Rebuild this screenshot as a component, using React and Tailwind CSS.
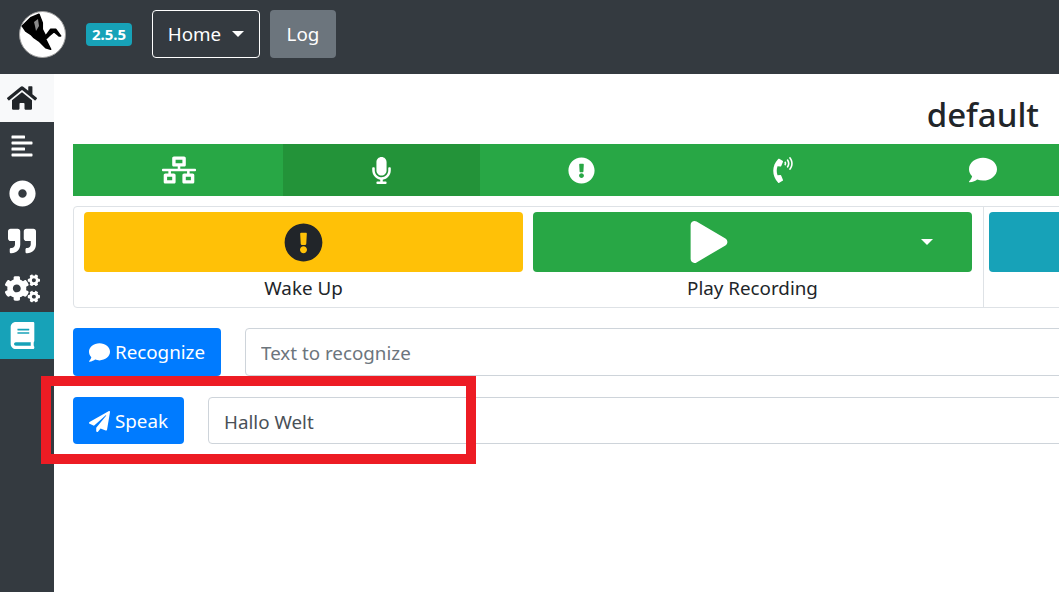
import React from 'react';
import {
  FaHome, FaAlignLeft, FaDotCircle, FaQuoteRight, FaCogs, FaBook, FaNetworkWired,
  FaMicrophone, FaExclamationCircle, FaPhoneVolume, FaComment, FaPlay, FaPaperPlane,
} from 'react-icons/fa';

const Logo = () => (
  <svg viewBox="0 0 47 47" className="w-[47px] h-[47px]">
    <circle cx="23.5" cy="23.5" r="23" fill="#fff" stroke="#a0a0a0" strokeWidth="1" />
    <path d="M3.3 15 L11.7 6.7 L20 3.3 L23.3 11.7 L23.3 18.3 L26.7 25 L31.7 18.3 L36.7 18.3 L41.7 25 L40 25 L35 20.7 L30 25 L26.7 28.3 L31.7 38.3 L26.7 36.7 L20 30 L15 26.7 L11.7 23.3 L6.7 20 Z" fill="#000" stroke="#000" strokeWidth="1.5" strokeLinejoin="round" />
    <path d="M15 11 L19 8 L20 15 L17 20 L16 15 Z" fill="#8a8a8a" />
  </svg>
);

const sideItems = [
  { Icon: FaHome, size: 30, cls: 'h-[48px] bg-[#f8f9fa] text-[#212529]' },
  { Icon: FaAlignLeft, size: 24, cls: 'h-[48px] text-white' },
  { Icon: FaDotCircle, size: 27, cls: 'h-[47px] text-white' },
  { Icon: FaQuoteRight, size: 28, cls: 'h-[48px] text-white' },
  { Icon: FaCogs, size: 35, cls: 'h-[47px] text-white' },
  { Icon: FaBook, size: 27, cls: 'h-[47px] bg-[#17a2b8] text-white' },
];

const tabs = [
  { Icon: FaNetworkWired, size: 34, cls: 'w-[210px] pl-[2px]' },
  { Icon: FaMicrophone, size: 27, cls: 'w-[197px] bg-[#239339]' },
  { Icon: FaExclamationCircle, size: 27, cls: 'w-[203px]' },
  { Icon: FaPhoneVolume, size: 26, cls: 'w-[200px]' },
  { Icon: FaComment, size: 28, cls: 'w-[200px]' },
];

export default function App() {
  return (
    <div className="relative w-[1059px] h-[592px] overflow-hidden bg-white text-[#212529] font-['Noto_Sans','Open_Sans',sans-serif]">
      {/* Navbar */}
      <nav className="h-[74px] bg-[#343a40] flex items-center pl-[19px] pb-[6px]">
        <Logo />
        <span className="ml-[20px] w-[46px] h-[23px] flex items-center justify-center rounded bg-[#17a2b8] text-white text-[15px] font-bold">2.5.5</span>
        <button className="ml-[20px] w-[108px] h-[48px] flex items-center justify-center gap-[11px] rounded border border-white text-white text-[18.8px]">
          Home
          <span className="w-0 h-0 border-x-[6px] border-x-transparent border-t-[6px] border-t-white"></span>
        </button>
        <button className="ml-[10px] w-[66px] h-[48px] rounded bg-[#6c757d] text-white text-[18.8px]">Log</button>
      </nav>

      <div className="flex h-[518px]">
        {/* Sidebar */}
        <aside className="w-[54px] shrink-0 bg-[#343a40]">
          {sideItems.map(({ Icon, size, cls }, i) => (
            <div key={i} className={`flex items-center justify-center pr-[10px] ${cls}`}>
              <Icon size={size} />
            </div>
          ))}
        </aside>

        {/* Main */}
        <main className="flex-1 min-w-0 pl-[19px] pr-0">
          <h1 className="h-[70px] flex items-center justify-end pr-[20px] pt-[12px] text-[33px] font-medium">default</h1>

          <div className="flex h-[52px] w-[1010px] bg-[#28a745] text-white">
            {tabs.map(({ Icon, size, cls }, i) => (
              <div key={i} className={`flex items-center justify-center shrink-0 ${cls}`}>
                <Icon size={size} />
              </div>
            ))}
          </div>

          <div className="mt-[10px] w-[1010px] h-[102px] flex border border-[#dee2e6] rounded">
            <div className="w-[910px] shrink-0 flex gap-[10px] pl-[10px] pt-[5px] border-r border-[#dee2e6]">
              <div className="w-[439px]">
                <button className="w-full h-[60px] flex items-center justify-center rounded bg-[#ffc107] text-[#212529]">
                  <FaExclamationCircle size={39} />
                </button>
                <p className="mt-[4px] text-center text-[18.8px] leading-[24px]">Wake Up</p>
              </div>
              <div className="w-[439px]">
                <button className="relative w-full h-[60px] flex items-center justify-center pr-[88px] rounded bg-[#28a745] text-white">
                  <FaPlay size={42} />
                  <span className="absolute right-[39px] top-[27px] w-0 h-0 border-x-[6px] border-x-transparent border-t-[6px] border-t-white"></span>
                </button>
                <p className="mt-[4px] text-center text-[18.8px] leading-[24px]">Play Recording</p>
              </div>
            </div>
            <div className="flex-1 pl-[5px] pt-[5px]">
              <div className="w-full h-[60px] rounded-l bg-[#17a2b8]"></div>
            </div>
          </div>

          <div className="mt-[20px] flex gap-[24px] w-[1010px]">
            <button className="w-[148px] h-[48px] shrink-0 flex items-center justify-center gap-[5px] pt-[1px] rounded bg-[#007bff] text-white text-[18.8px]">
              <FaComment size={21} />
              Recognize
            </button>
            <input
              readOnly
              placeholder="Text to recognize"
              className="flex-1 h-[48px] pl-[15px] pr-[16px] pt-[2px] rounded border border-[#ced4da] text-[18.8px] placeholder:text-[#6c757d] outline-none"
            />
          </div>

          <div className="mt-[21px] flex gap-[24px] w-[1010px]">
            <button className="w-[111px] h-[47px] shrink-0 flex items-center justify-center gap-[5px] pt-[2px] rounded bg-[#007bff] text-white text-[18.8px]">
              <FaPaperPlane size={21} />
              Speak
            </button>
            <input
              readOnly
              value="Hallo Welt"
              className="flex-1 h-[47px] pl-[15px] pr-[16px] pt-[2px] rounded border border-[#ced4da] text-[18.8px] text-[#495057] outline-none"
            />
          </div>
        </main>
      </div>

      {/* Red annotation */}
      <div className="absolute left-[41px] top-[376px] w-[435px] h-[88px] border-[10px] border-[#ed1c24]"></div>
    </div>
  );
}
